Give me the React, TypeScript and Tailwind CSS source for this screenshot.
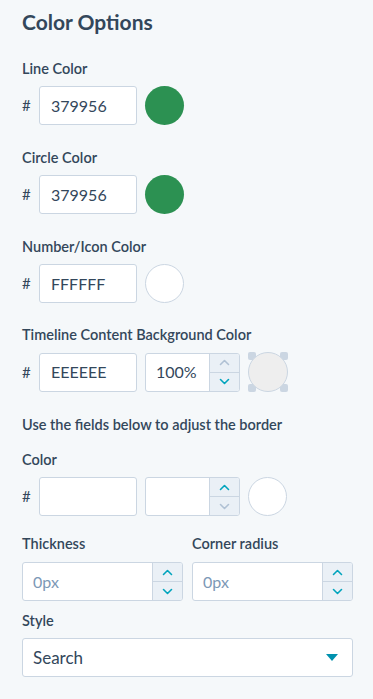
import React from 'react';

const FONT = { fontFamily: 'Lato, "Open Sans", sans-serif' };

function Chevron({ up, active }: { up?: boolean; active?: boolean }) {
  return (
    <svg width="11" height="7" viewBox="0 0 11 7" className={active ? 'text-[#00a4bd]' : 'text-[#b0c1d4]'}>
      <path
        d={up ? 'M1.5 5.5 L5.5 1.5 L9.5 5.5' : 'M1.5 1.5 L5.5 5.5 L9.5 1.5'}
        fill="none"
        stroke="currentColor"
        strokeWidth="1.6"
        strokeLinecap="round"
        strokeLinejoin="round"
      />
    </svg>
  );
}

function Label({ children, className = '' }: { children: React.ReactNode; className?: string }) {
  return <div className={`text-[14.5px] leading-5 font-semibold text-[#33475b] ${className}`}>{children}</div>;
}

function TextBox({ value, placeholder }: { value?: string; placeholder?: string }) {
  return (
    <div className="w-[98px] h-[39px] bg-white border border-[#cbd6e2] rounded-[3px] flex items-center px-[11px] text-[16px] text-[#33475b]">
      {value || <span className="text-[#7c98b6]">{placeholder}</span>}
    </div>
  );
}

function Stepper({
  value,
  placeholder,
  upActive = true,
  downActive = true,
  className = '',
}: {
  value?: string;
  placeholder?: string;
  upActive?: boolean;
  downActive?: boolean;
  className?: string;
}) {
  return (
    <div className={`h-[39px] bg-white border border-[#cbd6e2] rounded-[3px] flex overflow-hidden ${className}`}>
      <div className="flex-1 flex items-center px-[10px] text-[16px] text-[#33475b]">
        {value || <span className="text-[#7c98b6]">{placeholder}</span>}
      </div>
      <div className="w-[30px] flex flex-col bg-[#eaf0f6] border-l border-[#cbd6e2]">
        <div className="flex-1 flex items-center justify-center border-b border-[#cbd6e2]">
          <Chevron up active={upActive} />
        </div>
        <div className="flex-1 flex items-center justify-center">
          <Chevron active={downActive} />
        </div>
      </div>
    </div>
  );
}

function Swatch({ color, bordered }: { color: string; bordered?: boolean }) {
  return (
    <div
      className={`w-[39px] h-[39px] rounded-full ${bordered ? 'border border-[#cbd6e2]' : ''}`}
      style={{ backgroundColor: color }}
    />
  );
}

function Hash() {
  return <span className="w-[9px] text-[15px] text-[#33475b]">#</span>;
}

export default function App() {
  return (
    <div className="min-h-screen bg-[#f5f8fa] pl-[22px] pr-[20px] pt-[8px] pb-6" style={FONT}>
      <h2 className="text-[21px] leading-7 font-bold text-[#33475b] mb-[23px]">Color Options</h2>

      <Label className="mb-[7px]">Line Color</Label>
      <div className="flex items-center gap-[8px] mb-[23px]">
        <Hash />
        <TextBox value="379956" />
        <Swatch color="#2c9152" />
      </div>

      <Label className="mb-[7px]">Circle Color</Label>
      <div className="flex items-center gap-[8px] mb-[23px]">
        <Hash />
        <TextBox value="379956" />
        <Swatch color="#2c9152" />
      </div>

      <Label className="mb-[7px]">Number/Icon Color</Label>
      <div className="flex items-center gap-[8px] mb-[22px]">
        <Hash />
        <TextBox value="FFFFFF" />
        <Swatch color="#ffffff" bordered />
      </div>

      <Label className="mb-[7px]">Timeline Content Background Color</Label>
      <div className="flex items-center gap-[8px] mb-[23px]">
        <Hash />
        <TextBox value="EEEEEE" />
        <Stepper value="100%" upActive={false} className="w-[95px]" />
        <div className="relative w-[40px] h-[40px]">
          {/* resize handles sit behind the swatch */}
          <span className="absolute left-0 top-0 w-[8px] h-[8px] rounded-[2px] bg-[#cbd6e2]" />
          <span className="absolute right-0 top-0 w-[8px] h-[8px] rounded-[2px] bg-[#cbd6e2]" />
          <span className="absolute left-0 bottom-0 w-[8px] h-[8px] rounded-[2px] bg-[#cbd6e2]" />
          <span className="absolute right-0 bottom-0 w-[8px] h-[8px] rounded-[2px] bg-[#cbd6e2]" />
          <div className="relative w-full h-full rounded-full bg-[#eeeeee] border border-[#cbd6e2]" />
        </div>
      </div>

      <Label className="mb-[15px]">Use the fields below to adjust the border</Label>

      <Label className="mb-[7px]">Color</Label>
      <div className="flex items-center gap-[8px] mb-[18px]">
        <Hash />
        <TextBox />
        <Stepper downActive={false} className="w-[95px]" />
        <Swatch color="#ffffff" bordered />
      </div>

      <div className="grid grid-cols-2 gap-x-[9px] mb-[10px]">
        <div>
          <Label className="mb-[8px]">Thickness</Label>
          <Stepper placeholder="0px" />
        </div>
        <div>
          <Label className="mb-[8px]">Corner radius</Label>
          <Stepper placeholder="0px" />
        </div>
      </div>

      <Label className="mb-[7px]">Style</Label>
      <div className="h-[39px] bg-white border border-[#cbd6e2] rounded-[3px] flex items-center justify-between pl-[10px] pr-[14px] text-[17px] text-[#33475b]">
        <span>Search</span>
        <svg width="12" height="7" viewBox="0 0 12 7">
          <path d="M0 0 H12 L6 7 Z" fill="#0091ae" />
        </svg>
      </div>
    </div>
  );
}
